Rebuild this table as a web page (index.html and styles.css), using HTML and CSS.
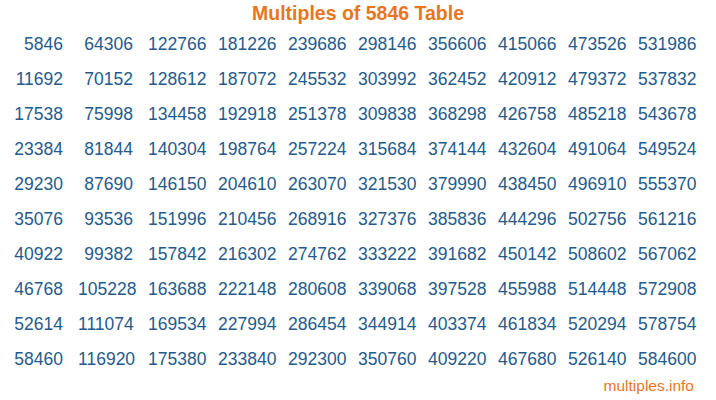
FILE: index.html
```html
<!DOCTYPE html>
<html>
<head>
<meta charset="utf-8">
<link rel="stylesheet" href="styles.css">
</head>
<body>
<div class="page">
<h1 class="title">Multiples of 5846 Table</h1>
<div class="grid">
<div class="cell">5846</div><div class="cell">64306</div><div class="cell">122766</div><div class="cell">181226</div><div class="cell">239686</div><div class="cell">298146</div><div class="cell">356606</div><div class="cell">415066</div><div class="cell">473526</div><div class="cell">531986</div>
<div class="cell">11692</div><div class="cell">70152</div><div class="cell">128612</div><div class="cell">187072</div><div class="cell">245532</div><div class="cell">303992</div><div class="cell">362452</div><div class="cell">420912</div><div class="cell">479372</div><div class="cell">537832</div>
<div class="cell">17538</div><div class="cell">75998</div><div class="cell">134458</div><div class="cell">192918</div><div class="cell">251378</div><div class="cell">309838</div><div class="cell">368298</div><div class="cell">426758</div><div class="cell">485218</div><div class="cell">543678</div>
<div class="cell">23384</div><div class="cell">81844</div><div class="cell">140304</div><div class="cell">198764</div><div class="cell">257224</div><div class="cell">315684</div><div class="cell">374144</div><div class="cell">432604</div><div class="cell">491064</div><div class="cell">549524</div>
<div class="cell">29230</div><div class="cell">87690</div><div class="cell">146150</div><div class="cell">204610</div><div class="cell">263070</div><div class="cell">321530</div><div class="cell">379990</div><div class="cell">438450</div><div class="cell">496910</div><div class="cell">555370</div>
<div class="cell">35076</div><div class="cell">93536</div><div class="cell">151996</div><div class="cell">210456</div><div class="cell">268916</div><div class="cell">327376</div><div class="cell">385836</div><div class="cell">444296</div><div class="cell">502756</div><div class="cell">561216</div>
<div class="cell">40922</div><div class="cell">99382</div><div class="cell">157842</div><div class="cell">216302</div><div class="cell">274762</div><div class="cell">333222</div><div class="cell">391682</div><div class="cell">450142</div><div class="cell">508602</div><div class="cell">567062</div>
<div class="cell">46768</div><div class="cell">105228</div><div class="cell">163688</div><div class="cell">222148</div><div class="cell">280608</div><div class="cell">339068</div><div class="cell">397528</div><div class="cell">455988</div><div class="cell">514448</div><div class="cell">572908</div>
<div class="cell">52614</div><div class="cell">111074</div><div class="cell">169534</div><div class="cell">227994</div><div class="cell">286454</div><div class="cell">344914</div><div class="cell">403374</div><div class="cell">461834</div><div class="cell">520294</div><div class="cell">578754</div>
<div class="cell">58460</div><div class="cell">116920</div><div class="cell">175380</div><div class="cell">233840</div><div class="cell">292300</div><div class="cell">350760</div><div class="cell">409220</div><div class="cell">467680</div><div class="cell">526140</div><div class="cell">584600</div>
</div>
<div class="footer">multiples.info</div>
</div>
</body>
</html>
```
FILE: styles.css
```css
html, body {
  margin: 0;
  padding: 0;
  background: #ffffff;
}
.page {
  width: 716px;
  font-family: "Liberation Sans", Arial, sans-serif;
}
.title {
  margin: 0;
  font-size: 19.5px;
  line-height: 27px;
  font-weight: bold;
  color: #e8761f;
  text-align: center;
}
.grid {
  display: grid;
  grid-template-columns: repeat(10, 70px);
  grid-auto-rows: 35px;
  margin-left: 8px;
  width: 700px;
}
.cell {
  font-size: 17.5px;
  line-height: 35px;
  color: #245b8c;
  text-align: right;
  padding-right: 15px;
}
.footer {
  font-size: 15.5px;
  line-height: 16px;
  color: #e8761f;
  text-align: right;
  padding-right: 22px;
  margin-top: 1px;
}
```
